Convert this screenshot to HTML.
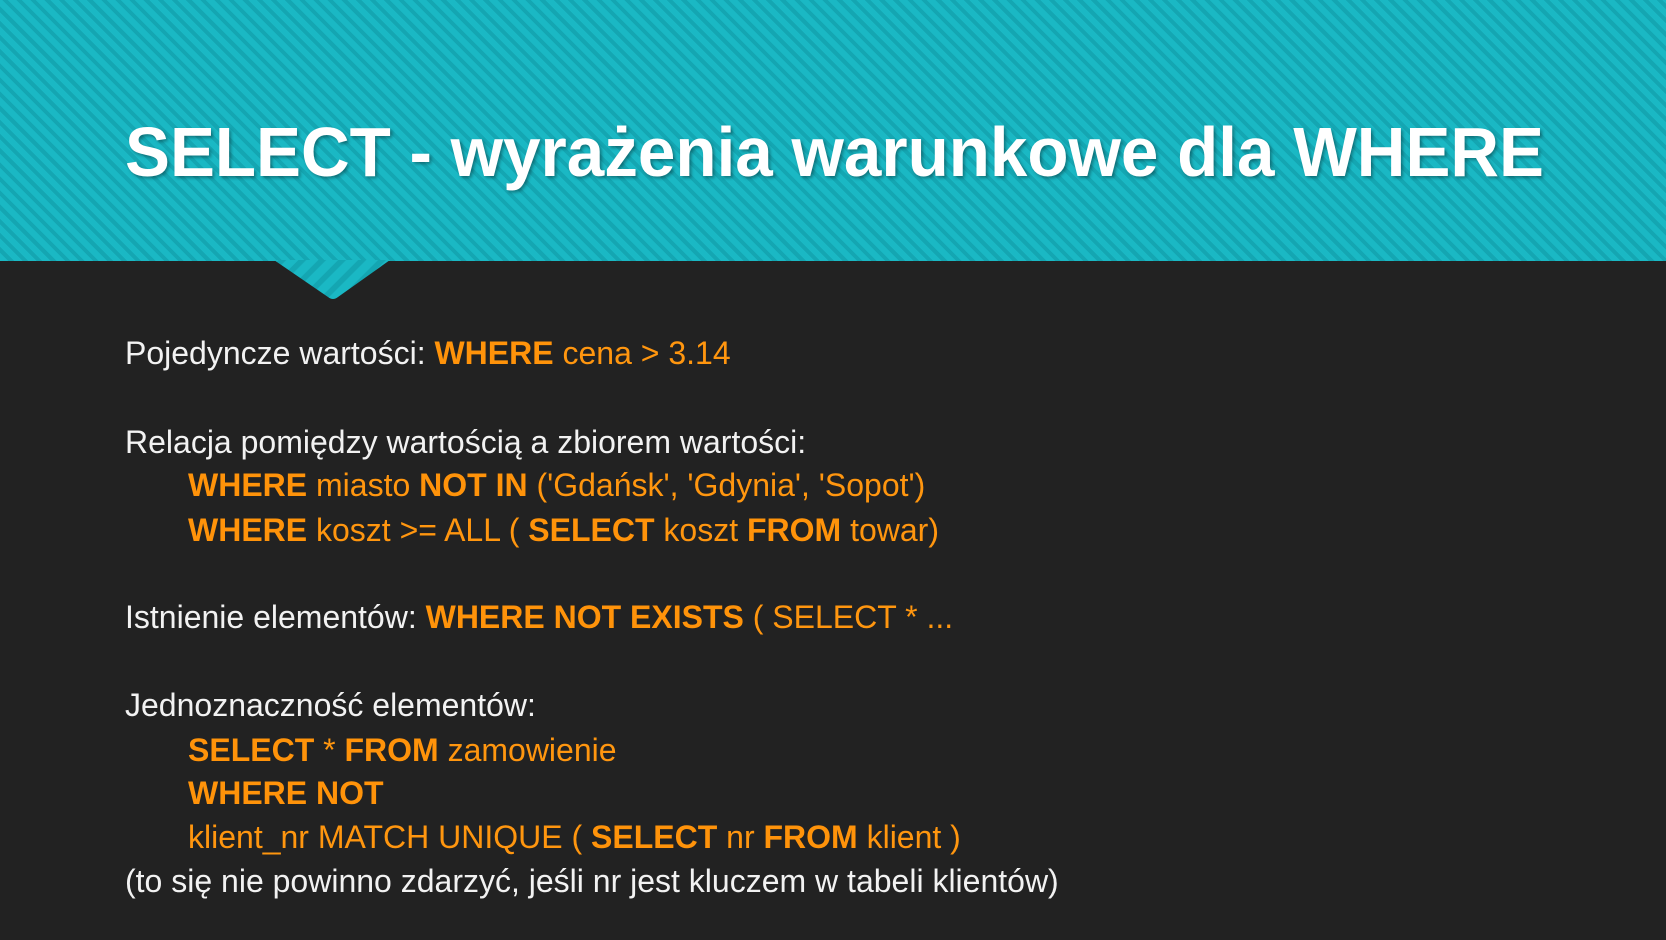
<!DOCTYPE html>
<html><head><meta charset="utf-8"><style>
body{margin:0;width:1666px;height:940px;overflow:hidden;background:#222222;font-family:"Liberation Sans",sans-serif;position:relative}
.band{position:absolute;left:0;top:0;width:1666px;height:261px;background:repeating-linear-gradient(45deg,#1ab8c4 0 6px,#14a6b2 6px 10px)}
.tri{position:absolute;left:0;top:0}
h1{position:absolute;left:125px;top:112px;margin:0;font-size:70px;font-weight:bold;color:#fff;white-space:nowrap;letter-spacing:0px;transform-origin:left top;text-shadow:2px 2px 3px rgba(0,0,0,.35)}
.l{position:absolute;font-size:32px;line-height:32px;color:#f2f2f2;white-space:nowrap}
.o{color:#ff960f}
b{color:#ff930a}
</style></head><body>
<div class="band"></div>
<svg class="tri" width="1666" height="320"><defs><pattern id="p" width="14.1" height="14.1" patternUnits="userSpaceOnUse" patternTransform="rotate(45)"><rect width="14.1" height="14.1" fill="#1ab8c4"/><rect width="5.6" height="14.1" fill="#14a6b2"/></pattern></defs><path d="M274 260 L390 260 L338 297 Q333 301 328 297 Z" fill="url(#p)"/></svg>
<h1 id="t">SELECT - wyrażenia warunkowe dla WHERE</h1>
<div class="l" style="left:125px;top:337px">Pojedyncze wartości: <b>WHERE</b> <span class="o">cena &gt; 3.14</span></div>
<div class="l" style="left:125px;top:426px">Relacja pomiędzy wartością a zbiorem wartości:</div>
<div class="l o" style="left:188px;top:469px"><b>WHERE</b> miasto <b>NOT IN</b> ('Gdańsk', 'Gdynia', 'Sopot')</div>
<div class="l o" style="left:188px;top:514px"><b>WHERE</b> koszt &gt;= ALL ( <b>SELECT</b> koszt <b>FROM</b> towar)</div>
<div class="l" style="left:125px;top:601px">Istnienie elementów: <b>WHERE NOT EXISTS</b> <span class="o">( SELECT * ...</span></div>
<div class="l" style="left:125px;top:689px">Jednoznaczność elementów:</div>
<div class="l o" style="left:188px;top:734px"><b>SELECT</b> * <b>FROM</b> zamowienie</div>
<div class="l o" style="left:188px;top:777px"><b>WHERE NOT</b></div>
<div class="l o" style="left:188px;top:821px">klient_nr MATCH UNIQUE ( <b>SELECT</b> nr <b>FROM</b> klient )</div>
<div class="l" style="left:125px;top:865px">(to się nie powinno zdarzyć, jeśli nr jest kluczem w tabeli klientów)</div>
<script>
var t=document.getElementById('t');var w=t.getBoundingClientRect().width;t.style.transform='scaleX('+(1419/w)+')';
</script>
</body></html>
